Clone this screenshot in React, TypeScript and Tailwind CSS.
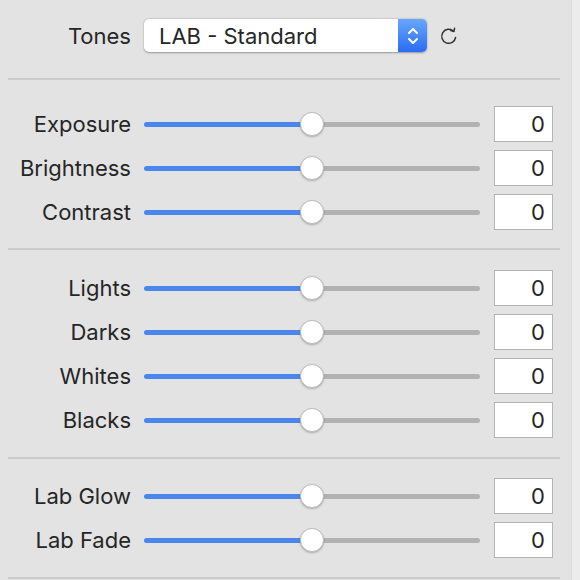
import React from "react";

const font = { fontFamily: '"Inter", "Liberation Sans", sans-serif' };

function Slider({ label }: { label: string }) {
  return (
    <div className="flex h-[44px] items-center">
      <div className="w-[131px] text-right text-[22px] leading-none text-[#262626]">{label}</div>
      <div className="relative ml-[13px] flex h-[24px] w-[336px] items-center">
        <div className="h-[5px] w-[168px] rounded-l-full bg-[#4b86ec]" />
        <div className="h-[5px] flex-1 rounded-r-full bg-[#b2b2b2]" />
        <div className="absolute left-[156px] top-[0px] h-[24px] w-[24px] rounded-full border-[0.5px] border-[#bdbdbd] bg-white shadow-[0_1px_2px_rgba(0,0,0,0.25)]" />
      </div>
      <div className="ml-[14px] flex h-[36px] w-[59px] items-center justify-end border border-[#b4b4b4] bg-white pr-[7px] text-[22px] leading-none text-[#262626]">
        0
      </div>
    </div>
  );
}

function Sep() {
  return <div className="ml-[8px] h-[2px] w-[552px] bg-[#cbcbcb]" />;
}

export default function App() {
  return (
    <div className="flex h-[580px] w-[580px] bg-[#e3e3e3]" style={font}>
      <div className="flex w-[571px] flex-col">
        <div className="flex h-[78px] items-start pt-[19px]">
          <div className="flex h-[33px] w-[131px] items-center justify-end text-[22px] leading-none text-[#262626]">
            Tones
          </div>
          <div className="ml-[13px] flex h-[33px] w-[283px] rounded-[5px] bg-white shadow-[0_0.5px_2px_rgba(0,0,0,0.35)]">
            <div className="flex flex-1 items-center pl-[15px] text-[22px] leading-none text-[#262626]">
              LAB - Standard
            </div>
            <div className="flex w-[29px] items-center justify-center rounded-r-[5px] bg-gradient-to-b from-[#69a6fb] to-[#2a6cf1]">
              <svg width="14" height="24" viewBox="0 0 14 24" fill="none" stroke="white" strokeWidth="2" strokeLinecap="round" strokeLinejoin="round">
                <path d="M3 9 L7 5 L11 9" />
                <path d="M3 15 L7 19 L11 15" />
              </svg>
            </div>
          </div>
          <div className="ml-[12px] flex h-[33px] items-center">
            <svg width="20" height="20" viewBox="0 0 20 20" fill="none" stroke="#333" strokeWidth="1.5" strokeLinecap="round" strokeLinejoin="round">
              <path d="M16.6 11.5 A7 7 0 1 1 14.5 5.2" />
              <path d="M11.8 4.6 L15 5.4 L15.6 2.2" />
            </svg>
          </div>
        </div>
        <Sep />
        <div className="flex flex-col pt-[22px]">
          <Slider label="Exposure" />
          <Slider label="Brightness" />
          <Slider label="Contrast" />
        </div>
        <div className="mt-[14px]">
          <Sep />
        </div>
        <div className="flex flex-col pt-[16px]">
          <Slider label="Lights" />
          <Slider label="Darks" />
          <Slider label="Whites" />
          <Slider label="Blacks" />
        </div>
        <div className="mt-[15px]">
          <Sep />
        </div>
        <div className="flex flex-col pt-[15px]">
          <Slider label="Lab Glow" />
          <Slider label="Lab Fade" />
        </div>
        <div className="mt-[15px]">
          <Sep />
        </div>
      </div>
      <div className="w-[9px] border-l border-[#dcdcdc] bg-[#ececec]" />
    </div>
  );
}
